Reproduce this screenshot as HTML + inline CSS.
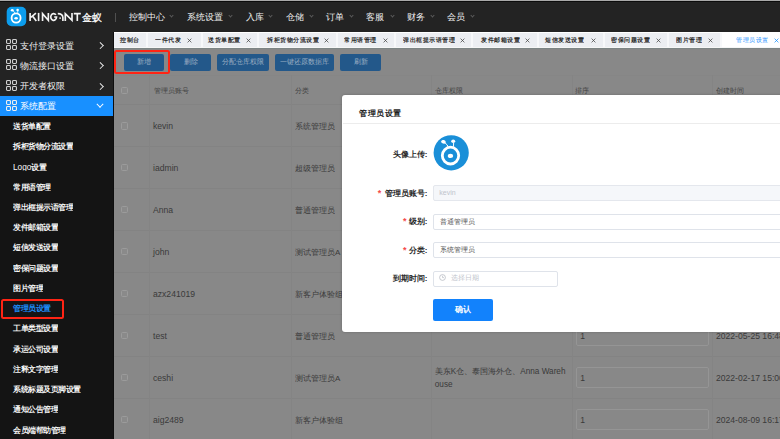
<!DOCTYPE html>
<html><head><meta charset="utf-8">
<style>
*{box-sizing:border-box;margin:0;padding:0}
html,body{width:780px;height:439px;overflow:hidden;background:#888;font-family:"Liberation Sans",sans-serif;position:relative}
.a{position:absolute;white-space:nowrap}
#topstrip{left:0;top:0;width:780px;height:1px;background:#a9a9a9}
#topblack{left:0;top:1px;width:780px;height:1px;background:#0c0c0c}
#hdr{left:0;top:2px;width:780px;height:30px;background:#232323}
.nav{top:12px;font-size:9px;line-height:10px;color:#f0f0f0;font-weight:500}
.caret{top:14.3px;width:3px;height:3px;border-right:0.9px solid #5c5c5c;border-bottom:0.9px solid #5c5c5c;transform:rotate(45deg)}
#side{left:0;top:32px;width:114px;height:407px;background:#141414}
#sidetop{left:0;top:32px;width:114px;height:64px;background:#232323}
#sideedge{left:112.5px;top:32px;width:1.5px;height:407px;background:#0e0e0e}
#active{left:0;top:95.5px;width:114px;height:20px;background:#1890ff}
.mi{left:19.5px;font-size:9px;line-height:10px;color:#f0f0f0;font-weight:500}
.si{left:12.7px;font-size:15.2px;line-height:18px;color:#f8f8f8;font-weight:bold;transform:scale(0.5);transform-origin:0 0}
.grid{left:5.9px;width:11px;height:11px}
.arr{left:97.6px;width:4.6px;height:4.6px;border-right:1.6px solid #e8e8e8;border-top:1.6px solid #e8e8e8;transform:rotate(45deg)}
#tabs{left:114px;top:32px;width:666px;height:16px;background:#f7f8fa;border-top:1px solid #fff}
.tab{top:33px;height:14px;background:#eceef2}
.tt{top:36.2px;font-size:12.6px;line-height:15px;color:#2a2a2a;font-weight:bold;transform:scale(0.5);transform-origin:0 0}
#tabline{left:114px;top:47px;width:666px;height:1px;background:#f6f6f6}
#tabline2{left:114px;top:48px;width:666px;height:1px;background:#7d8585}
.btn{top:54px;height:16.5px;background:#23588a;border-radius:2px;color:#9cafc3;font-size:7px;line-height:16.5px;text-align:center}
.hl{border:2px solid #ff2414;border-radius:2.5px}
.vl{top:75px;width:1px;height:364px;background:#848484}
.hline{left:114px;width:666px;height:1px;background:#838383}
.cb{left:120.5px;width:7.5px;height:7.5px;border:1px solid #9b9b9b;border-radius:1.5px;background:#8a8a8a}
.th{top:86px;font-size:13.6px;line-height:18px;color:#444;font-weight:500;transform:scale(0.5);transform-origin:0 0}
.td{font-size:8.2px;line-height:10px;color:#3a3a3a}
.inp{left:575.5px;width:133.5px;height:21px;border:1px solid #959595;border-radius:2px}
#modal{left:342px;top:95px;width:460px;height:237px;background:#fff;border-radius:3px;box-shadow:0 0 2.5px rgba(0,0,0,0.25)}
.lbl{right:352.6px;font-size:8px;line-height:9px;color:#2b2b2b;font-weight:bold;letter-spacing:-0.1px}
.star{font-size:9px;line-height:9px;color:#f54a4a;font-weight:bold}
.field{left:433px;height:16px;border:1px solid #dfe3ea;border-radius:2px;background:#fff}
.ft{font-size:7px;line-height:8px;color:#555}
</style></head><body>
<div class="a" id="topstrip"></div><div class="a" id="topblack"></div><div class="a" id="hdr"></div>
<svg class="a" style="left:6px;top:6px" width="21" height="21" viewBox="0 0 21 21">
<rect x="0.7" y="0.7" width="19.5" height="19.5" rx="5" fill="#0c9ded"/>
<ellipse cx="10.1" cy="12" rx="4.5" ry="4.6" fill="none" stroke="#fff" stroke-width="1.8"/>
<ellipse cx="10.1" cy="12.2" rx="1.75" ry="1.3" fill="#fff"/>
<ellipse cx="6.25" cy="4.3" rx="1.45" ry="1.2" fill="#fff"/><ellipse cx="11.6" cy="4.0" rx="1.3" ry="1.2" fill="#fff"/>
<path d="M7.1 4.9 Q8.5 5.9 8.95 7.6 M11.8 4.9 Q11.9 6.1 11.5 7.5" fill="none" stroke="#fff" stroke-width="0.8"/>
</svg>
<svg class="a" style="left:0;top:0" width="90" height="30" viewBox="0 0 90 30"><g fill="none" stroke="#f4f4f4" stroke-width="1.65"><path d="M30.1 12.9 V21.1 M35.9 13.2 L30.9 17.4 M32.5 16.1 L36.3 21.1"/><path d="M38.6 12.9 V21.1"/><path d="M42.55 21.1 V13.65 L48.35 20.35 V12.9"/><path d="M55.9 14.85 A2.9 3.35 0 1 0 56.55 17.0 H54.2"/><path d="M57.8 13.65 Q62.6 13.65 62.9 17.5 V21.1"/><path d="M65.3 21.1 V13.65 L72.0 20.35 V12.9"/><path d="M73.8 13.65 H80.8 M77.3 13.65 V21.1"/></g><circle cx="60.1" cy="18.1" r="0.9" fill="#f4f4f4"/></svg>
<div class="a" style="left:82.2px;top:12.5px;font-size:19px;line-height:19px;color:#f2f2f2;font-weight:bold;transform:scale(0.5);transform-origin:0 0">金蚁</div>
<div class="a" style="left:115px;top:12.7px;width:1px;height:9.7px;background:#505050"></div>
<div class="a nav" style="left:128.6px">控制中心</div><div class="a caret" style="left:170.2px"></div>
<div class="a nav" style="left:187px">系统设置</div><div class="a caret" style="left:229.2px"></div>
<div class="a nav" style="left:245.5px">入库</div><div class="a caret" style="left:269.2px"></div>
<div class="a nav" style="left:285.6px">仓储</div><div class="a caret" style="left:309.5px"></div>
<div class="a nav" style="left:326px">订单</div><div class="a caret" style="left:350.0px"></div>
<div class="a nav" style="left:366.4px">客服</div><div class="a caret" style="left:390.5px"></div>
<div class="a nav" style="left:407px">财务</div><div class="a caret" style="left:430.8px"></div>
<div class="a nav" style="left:447.4px">会员</div><div class="a caret" style="left:471.0px"></div>
<div class="a" id="side"></div><div class="a" id="sidetop"></div><div class="a" id="active"></div><div class="a" id="sideedge"></div>
<svg class="a grid" style="top:39.2px" width="11" height="11" viewBox="0 0 11 11"><g fill="none" stroke="#d0d0d0" stroke-width="1.1"><rect x="0.55" y="0.55" width="3.9" height="3.9" rx="0.9"/><rect x="6.55" y="0.55" width="3.9" height="3.9" rx="0.9"/><rect x="0.55" y="6.55" width="3.9" height="3.9" rx="0.9"/><rect x="6.55" y="6.55" width="3.9" height="3.9" rx="0.9"/></g></svg>
<div class="a mi" style="top:40.5px">支付登录设置</div>
<div class="a arr" style="top:43.3px"></div>
<svg class="a grid" style="top:59.2px" width="11" height="11" viewBox="0 0 11 11"><g fill="none" stroke="#d0d0d0" stroke-width="1.1"><rect x="0.55" y="0.55" width="3.9" height="3.9" rx="0.9"/><rect x="6.55" y="0.55" width="3.9" height="3.9" rx="0.9"/><rect x="0.55" y="6.55" width="3.9" height="3.9" rx="0.9"/><rect x="6.55" y="6.55" width="3.9" height="3.9" rx="0.9"/></g></svg>
<div class="a mi" style="top:60.5px">物流接口设置</div>
<div class="a arr" style="top:63.3px"></div>
<svg class="a grid" style="top:79.7px" width="11" height="11" viewBox="0 0 11 11"><g fill="none" stroke="#d0d0d0" stroke-width="1.1"><rect x="0.55" y="0.55" width="3.9" height="3.9" rx="0.9"/><rect x="6.55" y="0.55" width="3.9" height="3.9" rx="0.9"/><rect x="0.55" y="6.55" width="3.9" height="3.9" rx="0.9"/><rect x="6.55" y="6.55" width="3.9" height="3.9" rx="0.9"/></g></svg>
<div class="a mi" style="top:81px">开发者权限</div>
<div class="a arr" style="top:83.8px"></div>
<svg class="a grid" style="top:99.6px" width="11" height="11" viewBox="0 0 11 11"><g fill="none" stroke="#f0f0f0" stroke-width="1.1"><rect x="0.55" y="0.55" width="3.9" height="3.9" rx="0.9"/><rect x="6.55" y="0.55" width="3.9" height="3.9" rx="0.9"/><rect x="0.55" y="6.55" width="3.9" height="3.9" rx="0.9"/><rect x="6.55" y="6.55" width="3.9" height="3.9" rx="0.9"/></g></svg>
<div class="a mi" style="top:100.9px;color:#fff">系统配置</div>
<div class="a arr" style="top:102.3px;transform:rotate(135deg);border-color:#fff"></div>
<div class="a si" style="top:121.8px">送货单配置</div>
<div class="a si" style="top:142.1px">拆柜货物分流设置</div>
<div class="a si" style="top:162.3px"><span style="font-weight:normal;font-size:16.5px">Logo</span>设置</div>
<div class="a si" style="top:182.6px">常用语管理</div>
<div class="a si" style="top:202.8px">弹出框提示语管理</div>
<div class="a si" style="top:223.1px">发件邮箱设置</div>
<div class="a si" style="top:243.3px">短信发送设置</div>
<div class="a si" style="top:263.6px">密保问题设置</div>
<div class="a si" style="top:283.8px">图片管理</div>
<div class="a si" style="top:304.1px;color:#1d8cf8">管理员设置</div>
<div class="a si" style="top:324.3px">工单类型设置</div>
<div class="a si" style="top:344.6px">承运公司设置</div>
<div class="a si" style="top:364.8px">注释文字管理</div>
<div class="a si" style="top:385.1px">系统标题及页脚设置</div>
<div class="a si" style="top:405.3px">通知公告管理</div>
<div class="a si" style="top:425.6px">会员端帮助管理</div>
<div class="a hl" style="left:0.6px;top:298.6px;width:63px;height:20.4px"></div>
<div class="a" id="tabs"></div>
<div class="a tab" style="left:114px;width:32px"></div>
<div class="a tt" style="left:120px">控制台</div>
<div class="a tab" style="left:148px;width:52.80000000000001px"></div>
<div class="a tt" style="left:155.4px">一件代发</div>
<svg class="a" style="left:186.7px;top:37.5px" width="5" height="5" viewBox="0 0 5 5"><path d="M0.6 0.6 L4.4 4.4 M4.4 0.6 L0.6 4.4" stroke="#444" stroke-width="0.75"/></svg>
<div class="a tab" style="left:202.8px;width:54.19999999999999px"></div>
<div class="a tt" style="left:207.7px">送货单配置</div>
<svg class="a" style="left:245.7px;top:37.5px" width="5" height="5" viewBox="0 0 5 5"><path d="M0.6 0.6 L4.4 4.4 M4.4 0.6 L0.6 4.4" stroke="#444" stroke-width="0.75"/></svg>
<div class="a tab" style="left:259px;width:76.80000000000001px"></div>
<div class="a tt" style="left:266.7px">拆柜货物分流设置</div>
<svg class="a" style="left:323.5px;top:37.5px" width="5" height="5" viewBox="0 0 5 5"><path d="M0.6 0.6 L4.4 4.4 M4.4 0.6 L0.6 4.4" stroke="#444" stroke-width="0.75"/></svg>
<div class="a tab" style="left:337.8px;width:56.599999999999966px"></div>
<div class="a tt" style="left:344.4px">常用语管理</div>
<svg class="a" style="left:382.7px;top:37.5px" width="5" height="5" viewBox="0 0 5 5"><path d="M0.6 0.6 L4.4 4.4 M4.4 0.6 L0.6 4.4" stroke="#444" stroke-width="0.75"/></svg>
<div class="a tab" style="left:396.4px;width:75.0px"></div>
<div class="a tt" style="left:403px">弹出框提示语管理</div>
<svg class="a" style="left:460.2px;top:37.5px" width="5" height="5" viewBox="0 0 5 5"><path d="M0.6 0.6 L4.4 4.4 M4.4 0.6 L0.6 4.4" stroke="#444" stroke-width="0.75"/></svg>
<div class="a tab" style="left:473.4px;width:63.89999999999998px"></div>
<div class="a tt" style="left:480.6px">发件邮箱设置</div>
<svg class="a" style="left:525.2px;top:37.5px" width="5" height="5" viewBox="0 0 5 5"><path d="M0.6 0.6 L4.4 4.4 M4.4 0.6 L0.6 4.4" stroke="#444" stroke-width="0.75"/></svg>
<div class="a tab" style="left:539.3px;width:63.40000000000009px"></div>
<div class="a tt" style="left:545.4px">短信发送设置</div>
<svg class="a" style="left:590.5px;top:37.5px" width="5" height="5" viewBox="0 0 5 5"><path d="M0.6 0.6 L4.4 4.4 M4.4 0.6 L0.6 4.4" stroke="#444" stroke-width="0.75"/></svg>
<div class="a tab" style="left:604.7px;width:62.299999999999955px"></div>
<div class="a tt" style="left:611.2px">密保问题设置</div>
<svg class="a" style="left:656.4px;top:37.5px" width="5" height="5" viewBox="0 0 5 5"><path d="M0.6 0.6 L4.4 4.4 M4.4 0.6 L0.6 4.4" stroke="#444" stroke-width="0.75"/></svg>
<div class="a tab" style="left:669px;width:51px"></div>
<div class="a tt" style="left:676.2px">图片管理</div>
<svg class="a" style="left:708.4px;top:37.5px" width="5" height="5" viewBox="0 0 5 5"><path d="M0.6 0.6 L4.4 4.4 M4.4 0.6 L0.6 4.4" stroke="#444" stroke-width="0.75"/></svg>
<div class="a tab" style="left:722px;width:58px;background:#fff"></div>
<div class="a tt" style="left:735.8px;color:#1890ff;font-weight:normal">管理员设置</div>
<svg class="a" style="left:773.5px;top:37.5px" width="5" height="5" viewBox="0 0 5 5"><path d="M0.6 0.6 L4.4 4.4 M4.4 0.6 L0.6 4.4" stroke="#1890ff" stroke-width="0.75"/></svg>
<div class="a" id="tabline"></div><div class="a" id="tabline2"></div>
<div class="a btn" style="left:123.5px;width:40.5px">新增</div>
<div class="a btn" style="left:170px;width:41.0px">删除</div>
<div class="a btn" style="left:217px;width:52.0px">分配仓库权限</div>
<div class="a btn" style="left:275.4px;width:58.6px">一键还原数据库</div>
<div class="a btn" style="left:340px;width:41.0px">刷新</div>
<div class="a hl" style="left:114.3px;top:50px;width:55.8px;height:23.6px"></div>
<div class="a hline" style="top:75px;background:#868686"></div>
<div class="a hline" style="top:104.2px"></div>
<div class="a hline" style="top:146.2px"></div>
<div class="a hline" style="top:188px"></div>
<div class="a hline" style="top:229.8px"></div>
<div class="a hline" style="top:271.8px"></div>
<div class="a hline" style="top:313.8px"></div>
<div class="a hline" style="top:355.8px"></div>
<div class="a hline" style="top:397.6px"></div>
<div class="a vl" style="left:149px"></div>
<div class="a vl" style="left:290.5px"></div>
<div class="a vl" style="left:431px"></div>
<div class="a vl" style="left:571.5px"></div>
<div class="a vl" style="left:712px"></div>
<div class="a cb" style="top:86.5px"></div>
<div class="a th" style="left:153.7px">管理员账号</div>
<div class="a th" style="left:294.9px">分类</div>
<div class="a th" style="left:435.4px">仓库权限</div>
<div class="a th" style="left:575.4px">排序</div>
<div class="a th" style="left:716px">创建时间</div>
<div class="a cb" style="top:122.0px"></div>
<div class="a td" style="left:153px;top:121.2px;font-size:8.6px">kevin</div>
<div class="a td" style="left:294.6px;top:120.9px;font-size:16px;line-height:20px;font-weight:500;transform:scale(0.5);transform-origin:0 0">系统管理员</div>
<div class="a inp" style="top:115.3px"></div>
<div class="a td" style="left:580.3px;top:121.4px;font-size:8.6px">1</div>
<div class="a td" style="left:716px;top:121.1px;font-size:8.6px">2022-01-01 00:00</div>
<div class="a cb" style="top:163.9px"></div>
<div class="a td" style="left:153px;top:163.2px;font-size:8.6px">iadmin</div>
<div class="a td" style="left:294.6px;top:162.8px;font-size:16px;line-height:20px;font-weight:500;transform:scale(0.5);transform-origin:0 0">超级管理员</div>
<div class="a inp" style="top:157.2px"></div>
<div class="a td" style="left:580.3px;top:163.3px;font-size:8.6px">1</div>
<div class="a td" style="left:716px;top:163.1px;font-size:8.6px">2022-01-01 00:00</div>
<div class="a cb" style="top:205.9px"></div>
<div class="a td" style="left:153px;top:205.1px;font-size:8.6px">Anna</div>
<div class="a td" style="left:294.6px;top:204.8px;font-size:16px;line-height:20px;font-weight:500;transform:scale(0.5);transform-origin:0 0">普通管理员</div>
<div class="a inp" style="top:199.2px"></div>
<div class="a td" style="left:580.3px;top:205.3px;font-size:8.6px">1</div>
<div class="a td" style="left:716px;top:205.0px;font-size:8.6px">2022-01-01 00:00</div>
<div class="a cb" style="top:247.8px"></div>
<div class="a td" style="left:153px;top:247.1px;font-size:8.6px">john</div>
<div class="a td" style="left:294.6px;top:246.8px;font-size:16px;line-height:20px;font-weight:500;transform:scale(0.5);transform-origin:0 0">测试管理员A</div>
<div class="a inp" style="top:241.2px"></div>
<div class="a td" style="left:580.3px;top:247.2px;font-size:8.6px">1</div>
<div class="a td" style="left:716px;top:247.0px;font-size:8.6px">2022-01-01 00:00</div>
<div class="a cb" style="top:289.8px"></div>
<div class="a td" style="left:153px;top:289.0px;font-size:8.6px">azx241019</div>
<div class="a td" style="left:294.6px;top:288.7px;font-size:16px;line-height:20px;font-weight:500;transform:scale(0.5);transform-origin:0 0">新客户体验组</div>
<div class="a inp" style="top:283.1px"></div>
<div class="a td" style="left:580.3px;top:289.2px;font-size:8.6px">1</div>
<div class="a td" style="left:716px;top:288.9px;font-size:8.6px">2022-01-01 00:00</div>
<div class="a cb" style="top:331.8px"></div>
<div class="a td" style="left:153px;top:330.9px;font-size:8.6px">test</div>
<div class="a td" style="left:294.6px;top:330.7px;font-size:16px;line-height:20px;font-weight:500;transform:scale(0.5);transform-origin:0 0">普通管理员</div>
<div class="a inp" style="top:325.1px"></div>
<div class="a td" style="left:580.3px;top:331.2px;font-size:8.6px">1</div>
<div class="a td" style="left:716px;top:330.9px;font-size:8.6px">2022-05-25 16:48</div>
<div class="a cb" style="top:373.7px"></div>
<div class="a td" style="left:153px;top:372.9px;font-size:8.6px">ceshi</div>
<div class="a td" style="left:294.6px;top:372.6px;font-size:16px;line-height:20px;font-weight:500;transform:scale(0.5);transform-origin:0 0">测试管理员A</div>
<div class="a inp" style="top:367.0px"></div>
<div class="a td" style="left:580.3px;top:373.1px;font-size:8.6px">1</div>
<div class="a td" style="left:716px;top:372.8px;font-size:8.6px">2022-02-17 15:00</div>
<div class="a cb" style="top:415.7px"></div>
<div class="a td" style="left:153px;top:414.9px;font-size:8.6px">aig2489</div>
<div class="a td" style="left:294.6px;top:414.6px;font-size:16px;line-height:20px;font-weight:500;transform:scale(0.5);transform-origin:0 0">新客户体验组</div>
<div class="a inp" style="top:409.0px"></div>
<div class="a td" style="left:580.3px;top:415.1px;font-size:8.6px">1</div>
<div class="a td" style="left:716px;top:414.8px;font-size:8.6px">2024-08-09 16:17</div>
<div class="a td" style="left:434.8px;top:365px;line-height:13px">美东K仓、泰国海外仓、Anna Wareh<br>ouse</div>
<div class="a" id="modal"></div>
<div class="a" style="left:358.8px;top:108.2px;font-size:16.9px;line-height:20px;color:#1f1f1f;font-weight:bold;transform:scale(0.5);transform-origin:0 0">管理员设置</div>
<div class="a" style="left:343px;top:123px;width:437px;height:1px;background:#ececec"></div>
<div class="a lbl" style="top:150px">头像上传:</div>
<svg class="a" style="left:432px;top:135px" width="38" height="37" viewBox="0 0 38 37">
<circle cx="19.2" cy="17.8" r="17.6" fill="#1a8fd8"/>
<ellipse cx="18.5" cy="20.6" rx="8.2" ry="8.4" fill="none" stroke="#fff" stroke-width="2.8"/>
<ellipse cx="18.5" cy="20.9" rx="2.7" ry="2.1" fill="#fff"/>
<ellipse cx="11.5" cy="6.8" rx="2.3" ry="1.8" transform="rotate(15 11.5 6.8)" fill="#fff"/><ellipse cx="21.2" cy="6.3" rx="2.0" ry="1.8" fill="#fff"/>
<path d="M13 7.8 Q15.6 9.6 16.4 12.6 M21.6 7.8 Q21.8 10 21.1 12.3" fill="none" stroke="#fff" stroke-width="1"/>
</svg>
<div class="a lbl" style="top:188.7px">管理员账号:</div><div class="a star" style="left:377.8px;top:188.7px">*</div>
<div class="a field" style="top:185px;width:360px;background:#f5f7fa;border-color:#e4e7ed"></div>
<div class="a ft" style="left:439.3px;top:189px;color:#c0c4cc">kevin</div>
<div class="a lbl" style="top:217.2px">级别:</div><div class="a star" style="left:402.9px;top:217.2px">*</div>
<div class="a field" style="top:213.5px;width:360px"></div>
<div class="a ft" style="left:439.5px;top:217.5px">普通管理员</div>
<div class="a lbl" style="top:245.7px">分类:</div><div class="a star" style="left:402.9px;top:245.7px">*</div>
<div class="a field" style="top:242px;width:360px"></div>
<div class="a ft" style="left:439.5px;top:246px">系统管理员</div>
<div class="a lbl" style="top:273.6px">到期时间:</div>
<div class="a field" style="top:270.5px;width:125px"></div>
<svg class="a" style="left:438.8px;top:274.1px" width="7" height="7" viewBox="0 0 7 7"><circle cx="3.5" cy="3.5" r="2.9" fill="none" stroke="#b8bcc4" stroke-width="0.8"/><path d="M3.5 1.8 V3.6 H5" fill="none" stroke="#b8bcc4" stroke-width="0.7"/></svg>
<div class="a ft" style="left:450.5px;top:274px;color:#c0c4cc">选择日期</div>
<div class="a" style="left:433px;top:299px;width:60px;height:22px;background:#1282fc;border-radius:2px;color:#fff;font-size:8px;line-height:22px;text-align:center;font-weight:bold">确认</div>
</body></html>
